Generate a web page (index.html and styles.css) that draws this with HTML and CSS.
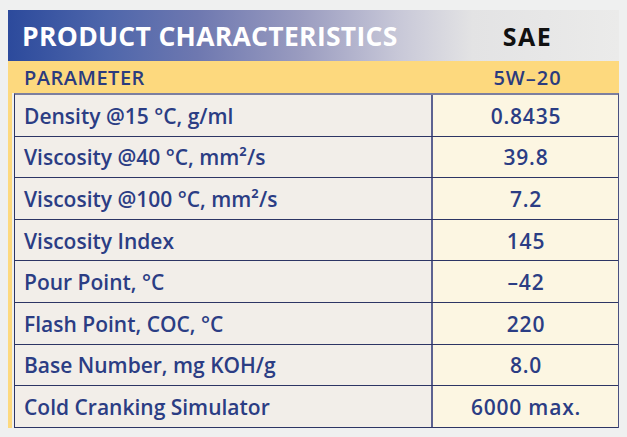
FILE: index.html
```html
<!DOCTYPE html>
<html lang="en">
<head>
<meta charset="utf-8">
<title>Product Characteristics</title>
<link rel="stylesheet" href="styles.css">
</head>
<body>
<div class="sheet">
  <div class="head">
    <div class="title">PRODUCT CHARACTERISTICS</div>
    <div class="sae">SAE</div>
  </div>
  <div class="band">
    <div class="band-param">PARAMETER</div>
    <div class="band-grade">5W–20</div>
  </div>
  <div class="body">
    <div class="strip"></div>
    <div class="grid">
      <div class="row"><div class="param">Density @15 °C, g/ml</div><div class="val">0.8435</div></div>
      <div class="row"><div class="param">Viscosity @40 °C, mm²/s</div><div class="val">39.8</div></div>
      <div class="row"><div class="param">Viscosity @100 °C, mm²/s</div><div class="val">7.2</div></div>
      <div class="row"><div class="param">Viscosity Index</div><div class="val">145</div></div>
      <div class="row"><div class="param">Pour Point, °C</div><div class="val">–42</div></div>
      <div class="row"><div class="param">Flash Point, COC, °C</div><div class="val">220</div></div>
      <div class="row"><div class="param">Base Number, mg KOH/g</div><div class="val">8.0</div></div>
      <div class="row"><div class="param">Cold Cranking Simulator</div><div class="val">6000 max.</div></div>
    </div>
  </div>
</div>
</body>
</html>
```
FILE: styles.css
```css
html, body {
  margin: 0;
  padding: 0;
}
body {
  background: #eff0f0;
  font-family: "Open Sans", "Liberation Sans", sans-serif;
  width: 627px;
  height: 437px;
  overflow: hidden;
}
.sheet {
  margin: 10px 0 0 8px;
  width: 611px;
}
.head {
  height: 51px;
  display: grid;
  grid-template-columns: 426px 1fr;
  align-items: center;
  background: linear-gradient(90deg, #2c4a9c 0%, #4e66ab 16%, #6e78b0 31%, #9a9cc0 48%, #c8c8d8 64%, #e3e3e4 76%, #ebebea 100%);
}
.title {
  color: #ffffff;
  font-weight: 700;
  font-size: 26.5px;
  letter-spacing: 0.3px;
  padding-left: 14px;
  padding-top: 1px;
  white-space: nowrap;
}
.sae {
  color: #111111;
  font-weight: 700;
  font-size: 25px;
  letter-spacing: 1.5px;
  text-align: center;
  padding-left: 2px;
  padding-top: 1px;
}
.band {
  height: 32px;
  display: grid;
  grid-template-columns: 426px 1fr;
  align-items: center;
  background: #fdd97e;
  color: #2b3b7e;
  font-weight: 600;
  font-size: 20px;
}
.band-param {
  padding-left: 16px;
  letter-spacing: 0.5px;
}
.band-grade {
  text-align: center;
  padding-left: 2px;
  letter-spacing: 1px;
}
.body {
  display: flex;
  gap: 2px;
}
.strip {
  width: 4px;
  background: #fdd97e;
}
.grid {
  flex: 1;
  border-top: 2px solid #7c7fa0;
  border-left: 1px solid #2d3564;
  border-right: 1.5px solid #4a5080;
}
.row {
  box-sizing: border-box;
  height: 41.6px;
  display: grid;
  grid-template-columns: 418px 1fr;
  border-bottom: 1px solid #2d3564;
  color: #2b3d84;
  font-weight: 600;
  font-size: 21px;
}
.param {
  background: #f2eee9;
  border-right: 2px solid #5d6290;
  padding-left: 9px;
  display: flex;
  align-items: center;
  padding-top: 1px;
  white-space: nowrap;
}
.val {
  background: #fcf6e2;
  display: flex;
  align-items: center;
  justify-content: center;
  padding-top: 1px;
  padding-left: 1px;
  letter-spacing: 0.8px;
}
```
